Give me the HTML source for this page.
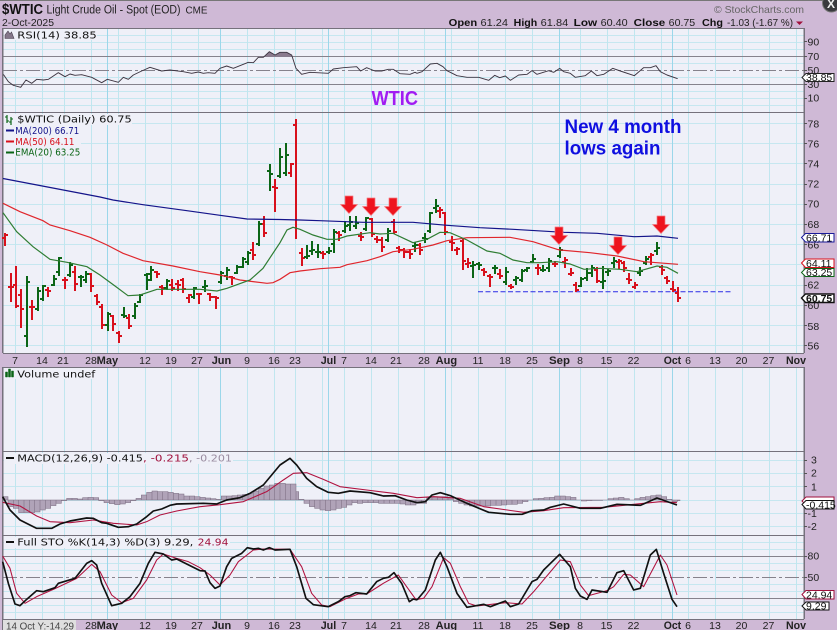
<!DOCTYPE html>
<html><head><meta charset="utf-8"><style>
html,body{margin:0;padding:0;background:#cfb9d6;overflow:hidden}
svg{display:block;font-family:"Liberation Sans",sans-serif}
.d{font-family:"DejaVu Sans",sans-serif;font-size:10px}
.a{font-size:10.5px;fill:#222;text-anchor:middle}
.m{font-size:11px;font-weight:bold;fill:#222}
.y{font-size:10.5px;fill:#222}
.t{font-size:10.5px;fill:#111}
</style></head><body>
<svg width="837" height="630" viewBox="0 0 837 630" xmlns="http://www.w3.org/2000/svg">
<rect width="837" height="630" fill="#cfb9d6"/>
<path d="M0 .5H837" stroke="#777" fill="none"/>
<!-- panels -->
<g fill="#eff0f8">
<rect x="3" y="28" width="801" height="325"/>
<rect x="3" y="367" width="801" height="252"/>
</g>
<!-- horizontal minor grid -->
<path shape-rendering="crispEdges" stroke="#c6e7f0" fill="none" d="M3 35.5H804M3 42.5H804M3 49.5H804M3 63.5H804M3 77.5H804M3 91.5H804M3 98.5H804M3 105.5H804
M3 123.5H804M3 143.5H804M3 163.5H804M3 184.5H804M3 204.5H804M3 224.5H804M3 244.5H804M3 264.5H804M3 285.5H804M3 305.5H804M3 325.5H804M3 345.5H804
M3 460.5H804M3 473.5H804M3 486.5H804M3 500.5H804M3 513.5H804M3 526.5H804
M3 542.5H804M3 549.5H804M3 563.5H804M3 570.5H804M3 584.5H804M3 591.5H804M3 605.5H804M3 612.5H804"/>
<!-- vertical grid -->
<path shape-rendering="crispEdges" stroke="#c0e6ef" fill="none" d="M15.5 28V353M42.5 28V353M64.5 28V353M91.5 28V353M118.5 28V353M145.5 28V353M171.5 28V353M198.5 28V353M247.5 28V353M274.5 28V353M295.5 28V353M322.5 28V353M344.5 28V353M371.5 28V353M398.5 28V353M424.5 28V353M451.5 28V353M478.5 28V353M505.5 28V353M532.5 28V353M580.5 28V353M607.5 28V353M634.5 28V353M661.5 28V353M688.5 28V353M715.5 28V353M742.5 28V353M769.5 28V353M796.5 28V353
M15.5 367V619M42.5 367V619M64.5 367V619M91.5 367V619M118.5 367V619M145.5 367V619M171.5 367V619M198.5 367V619M247.5 367V619M274.5 367V619M295.5 367V619M322.5 367V619M344.5 367V619M371.5 367V619M398.5 367V619M424.5 367V619M451.5 367V619M478.5 367V619M505.5 367V619M532.5 367V619M580.5 367V619M607.5 367V619M634.5 367V619M661.5 367V619M688.5 367V619M715.5 367V619M742.5 367V619M769.5 367V619M796.5 367V619"/>
<path shape-rendering="crispEdges" stroke="#9bd7ea" fill="none" d="M107.5 28V353M220.5 28V353M328.5 28V353M445.5 28V353M559.5 28V353M672.5 28V353M107.5 367V619M220.5 367V619M328.5 367V619M445.5 367V619M559.5 367V619M672.5 367V619"/>
<!-- RSI major lines -->
<path shape-rendering="crispEdges" stroke="#85828c" fill="none" d="M3 56.5H804M3 84.5H804"/>
<path shape-rendering="crispEdges" stroke="#85828c" fill="none" stroke-dasharray="14 3 3 3" d="M3 70.5H804"/>
<!-- STO major lines -->
<path shape-rendering="crispEdges" stroke="#85828c" fill="none" d="M3 556.5H804M3 598.5H804"/>
<path shape-rendering="crispEdges" stroke="#85828c" fill="none" stroke-dasharray="14 3 3 3" d="M3 577.5H804"/>
<!-- RSI line -->
<g transform="scale(.33333)" fill="none" stroke="#3c3440" stroke-width="2.8" stroke-linejoin="round">
<path fill="#8a7a8e" stroke="none" d="M775 170L775 172 790 172 808 155 825 165 840 157 860 157 875 165 877 170Z"/>
<path d="M8 220L25 245 40 256 62 262 78 240 95 250 110 238 130 240 145 238 175 218 195 230 210 222 225 226 245 224 275 232 305 248 322 238 355 247 370 232 385 238 400 225 425 213 450 202 485 213 510 210 550 215 575 220 595 216 610 220 625 218 645 220 660 205 680 198 700 205 745 187 760 188 775 172 790 172 808 155 825 165 840 157 860 157 875 165 888 205 905 223 930 217 985 220 1000 207 1030 203 1070 200 1082 213 1100 203 1125 213 1145 213 1165 208 1180 208 1200 221 1230 223 1245 217 1251 220"/>
</g>
<g transform="translate(417,0) scale(.33333)" fill="none" stroke="#3c3440" stroke-width="2.8" stroke-linejoin="round">
<path d="M0 220L15 215 40 192 60 190 78 200 90 212 120 227 150 232 185 232 215 241 233 226 248 233 265 228 280 241 305 225 330 223 345 212 360 223 395 212 410 217 428 205 440 215 460 220 475 232 505 227 523 213 540 227 560 223 587 205 610 213 652 227 680 203 700 203 717 197 730 215 750 225 782 236"/>
</g>
<!-- panel borders -->
<path shape-rendering="crispEdges" stroke="#75717c" fill="none" d="M3 28.5H804M3 112.5H804M3 353.5H804M3 367.5H804M3 451.5H804M3 535.5H804M3 619.5H804"/>
<path shape-rendering="crispEdges" stroke="#75717c" fill="none" stroke-width="1.5" d="M2.5 28V353M2.5 367V630M804 28V353M804 367V619"/>
<!-- dashed support line -->
<path fill="none" stroke="#2a2ae6" stroke-width="1" stroke-dasharray="5 2.5" d="M478 291.7H732"/>
<!-- bars -->
<path shape-rendering="crispEdges" fill="none" stroke="#d8101c" stroke-width="2" d="M5 233V246M2 238h3m0-3h3M11 273V302M8 287h3m0 0h3M16 266V308M13 285h3m0 21h3M21 289V328M18 295h3m0 14h3M32 300V320M29 307h3m0 0h3M48 287V297M45 290h3m0 1h3M65 277V289M62 280h3m0 0h3M75 266V291M72 272h3m0 12h3M91 273V292M88 274h3m0 12h3M97 294V305M94 296h3m0 6h3M102 304V329M99 307h3m0 18h3M113 315V331M110 316h3m0 8h3M119 331V343M116 333h3m0 3h3M129 314V329M126 318h3m0 8h3M157 271V278M154 272h3m0 2h3M162 285V295M159 287h3m0 1h3M172 279V291M169 285h3m0 3h3M178 280V291M175 284h3m0 1h3M183 278V293M180 280h3m0 9h3M189 294V303M186 298h3m0-3h3M199 293V304M196 294h3m0 0h3M210 293V301M207 294h3m0 3h3M216 296V309M213 297h3m0 1h3M232 276V285M229 277h3m0 1h3M253 242V260M250 250h3m0 5h3M264 216V237M261 224h3m0 9h3M275 179V212M272 187h3m0 1h3M291 163V177M288 173h3m0-9h3M296 119V239M293 125h3m0 0h0M302 248V266M299 253h3m0 5h3M323 251V259M320 253h3m0 1h3M339 231V241M336 233h3m0 2h3M361 232V241M358 236h3m0 1h3M372 218V237M369 219h3m0 15h3M377 236V243M374 239h3m0 1h3M382 237V252M379 240h3m0 7h3M394 219V234M391 222h3m0 10h3M399 246V253M396 248h3m0 2h3M404 248V258M401 250h3m0 2h3M410 249V259M407 252h3m0 2h3M420 243V255M417 245h3m0 5h3M440 207V218M437 211h3m0-1h3M445 212V235M442 213h3m0 19h3M452 236V251M449 242h3m0 1h3M457 247V255M454 250h3m0-1h3M463 238V270M460 241h3m0 20h3M468 258V268M465 264h3m0-1h3M484 268V276M481 270h3m0 2h3M490 274V287M487 276h3m0 1h3M500 269V279M497 274h3m0 2h3M511 284V289M508 286h3m0 1h3M538 264V275M535 268h3m0 0h3M555 261V267M552 264h3m0 0h3M565 257V268M562 262h3m0-2h3M571 268V276M568 274h3m0-1h3M576 282V292M573 285h3m0 5h3M597 267V283M594 270h3m0 11h3M619 259V269M616 262h3m0-1h3M624 261V272M621 263h3m0 5h3M629 273V284M626 279h3m0 1h3M635 282V289M632 287h3m0-2h3M651 253V265M648 257h3m0-2h3M662 265V275M659 267h3m0 3h3M667 276V284M664 278h3m0 3h3M673 281V292M670 289h3m0 1h3M678 287V302M675 293h3m0 5h3"/>
<path shape-rendering="crispEdges" fill="none" stroke="#0b6516" stroke-width="2" d="M27 276V347M24 336h3m0-54h3M38 287V311M35 309h3m0-18h3M43 285V301M40 299h3m0-13h3M54 275V286M51 285h3m0-6h3M59 257V276M56 272h3m0-14h3M70 262V277M67 275h3m0-10h3M81 275V287M78 277h3m0 0h3M86 271V283M83 280h3m0-6h3M108 312V331M105 325h3m0-11h3M124 307V318M121 315h3m0 1h3M135 303V319M132 316h3m0-10h3M140 294V303M137 302h3m0-7h3M147 273V290M144 275h3m0-1h3M151 266V281M148 280h3m0-10h3M167 279V290M164 288h3m0-7h3M194 287V299M191 297h3m0-9h3M205 280V292M202 287h3m0-1h3M221 271V284M218 282h3m0-9h3M227 267V280M224 276h3m0-6h3M237 265V274M234 273h3m0-6h3M243 257V268M240 267h3m0-8h3M248 251V265M245 262h3m0-9h3M259 221V246M256 244h3m0-20h3M270 164V191M267 171h3m0 3h3M280 148V178M277 176h3m0-19h3M286 143V176M283 173h3m0-18h3M307 245V259M304 257h3m0-1h3M312 241V255M309 251h3m0-1h3M318 244V258M315 252h3m0 0h3M329 247V254M326 252h3m0-1h3M334 229V253M331 244h3m0-12h3M345 221V233M342 231h3m0-5h3M350 216V231M347 225h3m0-3h3M356 216V229M353 226h3m0-3h3M366 217V231M363 229h3m0-11h3M388 228V242M385 240h3m0-9h3M415 242V252M412 246h3m0-1h3M425 233V243M422 238h3m0 1h3M430 212V233M427 231h3m0-18h3M436 199V213M433 208h3m0-2h3M473 261V278M470 266h3m0-1h3M479 262V270M476 264h3m0 1h3M495 265V274M492 268h3m0 0h3M506 267V285M503 282h3m0-10h3M516 276V285M513 280h3m0-2h3M522 269V282M519 280h3m0-9h3M527 267V272M524 270h3m0-2h3M533 254V263M530 262h3m0-3h3M543 265V272M540 270h3m0 0h3M549 258V272M546 268h3m0-7h3M560 247V258M557 256h3m0-6h3M581 277V287M578 286h3m0-7h3M587 268V281M584 278h3m0-5h3M592 265V277M589 273h3m0-5h3M603 266V289M600 282h3m0-1h3M608 269V276M605 272h3m0-1h3M614 257V268M611 263h3m0-2h3M640 267V276M637 273h3m0-2h3M646 256V265M643 263h3m0-4h3M657 242V255M654 251h3m0-3h3"/>
<!-- MAs -->
<path fill="none" stroke="#14148a" stroke-width="1.2" d="M3 178.5L100 197 113 200 143 204.7 187 210.7 220 215.3 247 219 280 219.5 300 220 320 220.7 363 222.3 413 222.3 447 225.3 480 227.7 513 229.3 553 231.7 564 232.3 597 233.3 634 236.7 657 236 678 238.3"/>
<path fill="none" stroke="#e0262c" stroke-width="1.2" d="M3 203.3L20 211.7 43 220.7 50 225 70 230.7 90 237.3 107 245 123 253.3 143 260.7 173 266 200 271.7 220 275 240 280 267 283.3 273 282.7 280 279.3 290 272.7 300 271 320 268.7 340 267.3 347 264.7 367 260.7 380 256.7 393 251.7 413 249.3 433 245 447 240.7 467 237.7 510 237.3 533 241.7 557 249.3 560 250 590 252.7 617 256 644 261.7 678 264.3"/>
<path fill="none" stroke="#2f7d33" stroke-width="1.2" d="M3 212.7L16.7 231.7 33 246.7 50 259.3 67 262.3 87 266.7 100 275 115 286 128 295.7 140 295 157 289.3 200 289.3 217 291 227 288.3 250 280 263 268.3 280 242.7 287 230 293 227.3 300 229.3 313 235 327 239.3 337 239.3 347 236 370 232.7 380 234 393 233.3 413 242.7 427 239.3 440 232.3 450 232.7 467 240 487 251 500 253.3 513 260 527 262.7 540 262.7 557 261.7 570 264 584 269.3 600 268.3 620 269.3 637 271.7 657 266 667 267.3 678 273.3"/>
<!-- arrows -->
<g fill="#ee141e" stroke="#f47a80" stroke-width=".7" stroke-linejoin="round">
<path d="M345 196H353V204.5H357.5L349 213.5 340.5 204.5H345Z"/>
<path d="M367 198H375V206.5H379.5L371 215.5 362.5 206.5H367Z"/>
<path d="M389 198H397V206.5H401.5L393 215.5 384.5 206.5H389Z"/>
<path d="M555 227H563V235.5H567.5L559 244.5 550.5 235.5H555Z"/>
<path d="M614 237H622V245.5H626.5L618 254.5 609.5 245.5H614Z"/>
<path d="M657 216H665V224.5H669.5L661 233.5 652.5 224.5H657Z"/>
</g>
<!-- MACD histogram -->
<g transform="translate(0,360) scale(.33333)" fill="#b0a3b8" stroke="#7a6c80" stroke-width="1.6">
<path d="M8 420V410h16V420zM24 420V440h16V420zM40 420V445h16V420zM56 420V458h16V420zM72 420V458h16V420zM88 420V458h16V420zM104 420V456h16V420zM120 420V450h16V420zM136 420V445h16V420zM152 420V437h16V420zM168 420V430h16V420zM184 420V422h16V420zM200 420V415h16V420zM216 420V415h16V420zM232 420V417h16V420zM248 420V413h16V420zM264 420V412h16V420zM280 420V413h16V420zM296 420V422h16V420zM312 420V428h16V420zM328 420V431h16V420zM344 420V434h16V420zM360 420V432h16V420zM376 420V428h16V420zM392 420V422h16V420zM408 420V415h16V420zM424 420V405h16V420zM440 420V397h16V420zM456 420V393h16V420zM472 420V395h16V420zM488 420V395h16V420zM504 420V397h16V420zM520 420V400h16V420zM536 420V402h16V420zM552 420V408h16V420zM568 420V408h16V420zM584 420V410h16V420zM600 420V412h16V420zM616 420V414h16V420zM632 420V416h16V420zM648 420V418h16V420zM664 420V408h16V420zM680 420V408h16V420zM696 420V407h16V420zM712 420V405h16V420zM728 420V403h16V420zM744 420V400h16V420zM760 420V393h16V420zM776 420V385h16V420zM792 420V378h16V420zM808 420V375h16V420zM824 420V370h16V420zM840 420V370h16V420zM856 420V372h16V420zM872 420V372h16V420zM888 420V395h8V420zM896 420V418h16V420zM912 420V430h16V420zM928 420V440h16V420zM944 420V445h16V420zM960 420V450h16V420zM976 420V452h16V420zM992 420V450h16V420zM1008 420V445h16V420zM1024 420V442h16V420zM1040 420V435h16V420zM1056 420V428h16V420zM1072 420V430h16V420zM1088 420V428h16V420zM1104 420V428h16V420zM1120 420V428h16V420zM1136 420V430h16V420zM1152 420V430h16V420zM1168 420V430h16V420zM1184 420V430h16V420zM1200 420V432h16V420zM1216 420V435h16V420zM1232 420V435h16V420z"/>
</g>
<g transform="translate(417,360) scale(.33333)" fill="#b0a3b8" stroke="#7a6c80" stroke-width="1.6">
<path d="M-3 420V430h16V420zM13 420V430h16V420zM29 420V412h16V420zM45 420V410h16V420zM61 420V410h16V420zM77 420V410h16V420zM93 420V412h16V420zM109 420V425h16V420zM125 420V430h16V420zM141 420V435h16V420zM157 420V438h16V420zM173 420V438h16V420zM189 420V438h16V420zM205 420V438h16V420zM221 420V436h16V420zM237 420V436h16V420zM253 420V435h16V420zM269 420V433h16V420zM285 420V433h16V420zM301 420V430h16V420zM317 420V425h16V420zM333 420V420h16V420zM349 420V416h16V420zM365 420V415h16V420zM381 420V413h16V420zM397 420V412h16V420zM413 420V408h16V420zM429 420V408h16V420zM445 420V410h16V420zM461 420V412h16V420zM477 420V420h16V420zM493 420V423h16V420zM509 420V422h16V420zM525 420V421h16V420zM541 420V421h16V420zM557 420V420h16V420zM573 420V416h16V420zM589 420V414h16V420zM605 420V412h16V420zM621 420V416h16V420zM637 420V420h16V420zM653 420V416h16V420zM669 420V412h16V420zM685 420V410h16V420zM701 420V407h16V420zM717 420V405h16V420zM733 420V410h16V420zM749 420V418h16V420zM765 420V425h16V420zM781 420V422h8V420z"/>
</g>
<!-- MACD lines -->
<g transform="translate(0,360) scale(.33333)" fill="none" stroke-linejoin="round">
<path stroke="#b0123f" stroke-width="3.2" d="M8 427L60 438 110 468 150 485 210 488 280 480 340 490 410 495 440 485 480 465 530 453 600 440 660 434 730 425 800 395 850 360 880 340 920 338 970 358 1020 380 1100 390 1180 400 1251 413"/>
<path stroke="#111" stroke-width="5" d="M8 410L30 450 60 480 80 490 110 505 155 505 180 492 210 483 260 474 280 475 305 488 320 490 355 502 385 500 410 492 440 470 460 453 485 447 510 436 530 432 610 430 650 432 680 420 720 413 750 400 790 375 815 345 840 315 870 295 890 315 920 355 950 380 985 397 1015 400 1050 393 1110 398 1150 408 1185 407 1220 420 1251 428"/>
</g>
<g transform="translate(417,360) scale(.33333)" fill="none" stroke-linejoin="round">
<path stroke="#b0123f" stroke-width="3.2" d="M0 413L50 410 130 415 200 440 320 457 380 452 440 443 560 442 640 434 730 425 780 428"/>
<path stroke="#111" stroke-width="5" d="M0 428L25 425 45 405 70 398 100 407 150 430 215 457 280 463 315 463 345 452 380 450 400 442 440 432 490 445 550 445 600 433 670 436 720 414 780 435"/>
</g>
<!-- STO lines -->
<g transform="translate(0,530) scale(.33333)" fill="none" stroke-linejoin="round">
<path stroke="#b0123f" stroke-width="3.2" d="M8 78L30 115 50 190 75 220 110 200 160 178 230 145 275 103 300 125 335 195 365 218 400 205 440 150 470 90 490 72 530 85 565 95 600 113 630 135 660 165 690 135 715 95 760 60 790 57 870 58 905 110 935 190 965 225 990 230 1040 205 1075 192 1100 192 1150 160 1195 135 1220 170 1245 205 1251 208"/>
<path stroke="#111" stroke-width="5" d="M8 95L25 160 45 222 60 227 80 208 110 182 130 185 165 173 175 160 225 145 260 100 275 92 290 105 305 160 335 227 365 220 390 200 420 160 445 100 465 67 490 72 515 90 530 87 600 122 615 123 630 158 645 175 660 168 680 110 695 85 725 70 742 53 760 57 775 55 790 60 808 53 825 60 870 58 890 110 918 205 940 224 985 230 1015 215 1035 200 1050 197 1068 188 1100 192 1130 155 1150 145 1165 142 1182 128 1205 160 1228 215 1240 207 1251 210"/>
</g>
<g transform="translate(417,530) scale(.33333)" fill="none" stroke-linejoin="round">
<path stroke="#b0123f" stroke-width="3.2" d="M0 208L20 205 45 170 80 83 100 100 130 170 155 220 180 228 265 218 315 222 350 185 430 90 460 95 490 165 515 197 570 182 590 170 620 133 640 135 680 170 730 75 750 105 780 195"/>
<path stroke="#111" stroke-width="5" d="M0 210L25 180 55 90 70 67 90 110 120 190 150 232 200 223 220 230 265 213 280 230 305 222 345 155 360 148 380 120 428 73 460 110 475 175 490 198 510 208 525 180 570 187 600 128 620 122 650 180 670 175 700 75 718 58 740 130 765 208 780 230"/>
</g>
<!-- legend backgrounds -->
<g fill="#eff0f8">
<rect x="4" y="29" width="93" height="11"/>
<rect x="4" y="114" width="128" height="11"/>
<rect x="4" y="125" width="77" height="32"/>
<rect x="4" y="368" width="92" height="11"/>
<rect x="4" y="453" width="229" height="11"/>
<rect x="4" y="537" width="226" height="11"/>
</g>
<!-- legend icons -->
<path d="M5 38.5L5 35 8 31 10 34 11.5 32 14 38.5Z" fill="#85778a" stroke="#4a4050" stroke-width=".6"/>
<path d="M7 115V123M11 117V125" stroke="#0b6516" stroke-width="1.2" fill="none"/>
<path d="M5 117h2M7 121h2M9 122h2M11 119h2" stroke="#0b6516" stroke-width="1" fill="none"/>
<path d="M5.5 377V372h2v5zM8.5 377V369h2v8zM11.5 377V371h2v6z" fill="#0b6516" stroke="#0b6516" stroke-width=".5"/>
<g stroke-width="2" fill="none">
<path d="M6 130.5H14" stroke="#14148a"/>
<path d="M6 141.5H14" stroke="#d8101c"/>
<path d="M6 152.5H14" stroke="#0b6516"/>
<path d="M6 458H14" stroke="#111"/>
<path d="M6 542H14" stroke="#111"/>
</g>
<!-- header -->
<text x="2" y="14" font-size="14.5" font-weight="bold" fill="#111" textLength="41" lengthAdjust="spacingAndGlyphs">$WTIC</text>
<text x="46.5" y="13.5" font-size="11.5" fill="#222" textLength="134" lengthAdjust="spacingAndGlyphs">Light Crude Oil - Spot (EOD)</text>
<text x="185.5" y="13.5" font-size="10" fill="#222" textLength="22" lengthAdjust="spacingAndGlyphs">CME</text>
<text x="2" y="26" font-size="10" fill="#222" textLength="52" lengthAdjust="spacingAndGlyphs">2-Oct-2025</text>
<text x="714" y="13" font-size="10.5" fill="#666" textLength="90" lengthAdjust="spacing">© StockCharts.com</text>
<g font-size="10.5" fill="#222">
<text x="448.7" y="26" font-weight="bold" fill="#111" textLength="28.5" lengthAdjust="spacingAndGlyphs">Open</text>
<text x="480.5" y="26" textLength="27.5" lengthAdjust="spacingAndGlyphs">61.24</text>
<text x="513.7" y="26" font-weight="bold" fill="#111" textLength="23.5" lengthAdjust="spacingAndGlyphs">High</text>
<text x="540.7" y="26" textLength="27.5" lengthAdjust="spacingAndGlyphs">61.84</text>
<text x="573.7" y="26" font-weight="bold" fill="#111" textLength="23.5" lengthAdjust="spacingAndGlyphs">Low</text>
<text x="600.7" y="26" textLength="27" lengthAdjust="spacingAndGlyphs">60.40</text>
<text x="633.7" y="26" font-weight="bold" fill="#111" textLength="31.5" lengthAdjust="spacingAndGlyphs">Close</text>
<text x="668.7" y="26" textLength="26.5" lengthAdjust="spacingAndGlyphs">60.75</text>
<text x="702" y="26" font-weight="bold" fill="#111" textLength="21" lengthAdjust="spacingAndGlyphs">Chg</text>
<text x="727" y="26" textLength="66" lengthAdjust="spacingAndGlyphs">-1.03 (-1.67 %)</text>
</g>
<path d="M796 21.5H803L799.5 25Z" fill="#a0103c"/>
<!-- close button -->
<circle cx="831.5" cy="3" r="9" fill="#3a3a3e" stroke="#777" stroke-width="1"/>
<text x="831" y="8" font-size="12" font-weight="bold" fill="#f2f2f2" text-anchor="middle">X</text>
<!-- annotations -->
<text x="371.5" y="105" font-size="20" font-weight="bold" fill="#a11cf2" textLength="46.5" lengthAdjust="spacingAndGlyphs">WTIC</text>
<text x="564.5" y="133" font-size="19" font-weight="bold" fill="#0f0fe0" textLength="117" lengthAdjust="spacingAndGlyphs">New 4 month</text>
<text x="564.5" y="154.5" font-size="19" font-weight="bold" fill="#0f0fe0" textLength="96" lengthAdjust="spacingAndGlyphs">lows again</text>
<!-- legends -->
<text class="d" x="17.3" y="38.7" fill="#111" textLength="79.5" lengthAdjust="spacingAndGlyphs">RSI(14) 38.85</text>
<text class="d" x="17.3" y="122.7" fill="#111" textLength="114.5" lengthAdjust="spacingAndGlyphs">$WTIC (Daily) 60.75</text>
<text class="d" x="15.3" y="134" fill="#14148a" textLength="64" lengthAdjust="spacingAndGlyphs">MA(200) 66.71</text>
<text class="d" x="15.3" y="145" fill="#d8101c" textLength="59.2" lengthAdjust="spacingAndGlyphs">MA(50) 64.11</text>
<text class="d" x="15.3" y="155.7" fill="#0b6516" textLength="65" lengthAdjust="spacingAndGlyphs">EMA(20) 63.25</text>
<text class="d" x="17.3" y="377.7" fill="#111" textLength="78" lengthAdjust="spacingAndGlyphs">Volume undef</text>
<text class="d" x="17.3" y="461.7" fill="#111" textLength="125.7" lengthAdjust="spacingAndGlyphs">MACD(12,26,9) -0.415</text>
<text class="d" x="143" y="461.7" fill="#a0103c" textLength="46" lengthAdjust="spacingAndGlyphs">, -0.215</text>
<text class="d" x="189" y="461.7" fill="#9a8ca0" textLength="43" lengthAdjust="spacingAndGlyphs">, -0.201</text>
<text class="d" x="17.3" y="545.7" fill="#111" textLength="176" lengthAdjust="spacingAndGlyphs">Full STO %K(14,3) %D(3) 9.29,</text>
<text class="d" x="197.7" y="545.7" fill="#a0103c" textLength="30.8" lengthAdjust="spacingAndGlyphs">24.94</text>
<!-- right axis ticks -->
<path shape-rendering="crispEdges" stroke="#555" fill="none" d="M804 41.5h3M804 56.5h3M804 70.5h3M804 84.5h3M804 98.5h3M804 123.5h3M804 143.5h3M804 163.5h3M804 184.5h3M804 204.5h3M804 224.5h3M804 244.5h3M804 264.5h3M804 285.5h3M804 305.5h3M804 325.5h3M804 345.5h3M804 460.5h3M804 473.5h3M804 486.5h3M804 513.5h3M804 526.5h3M804 556.5h3M804 577.5h3M804 598.5h3"/>
<g class="y">
<text x="807.5" y="45.5" class="y">90</text><text x="807.5" y="60" class="y">70</text><text x="807.5" y="74" class="y">50</text><text x="807.5" y="88" class="y">30</text><text x="807.5" y="101.5" class="y">10</text>
<text x="807.5" y="127.5" class="y">78</text><text x="807.5" y="147.5" class="y">76</text><text x="807.5" y="167.5" class="y">74</text><text x="807.5" y="187.5" class="y">72</text><text x="807.5" y="207.5" class="y">70</text><text x="807.5" y="228" class="y">68</text><text x="807.5" y="248.5" class="y">66</text><text x="807.5" y="288.5" class="y">62</text><text x="807.5" y="309" class="y">60</text><text x="807.5" y="330" class="y">58</text><text x="807.5" y="349.5" class="y">56</text>
<text x="811" y="463.5" class="y">3</text><text x="811" y="476.5" class="y">2</text><text x="811" y="490.5" class="y">1</text><text x="807.5" y="517" class="y">-1</text><text x="807.5" y="530" class="y">-2</text>
<text x="807.5" y="559.5" class="y">80</text><text x="807.5" y="581" class="y">50</text>
</g>
<!-- tags -->
<g stroke-width="1" fill="#fff">
<path d="M802 77.5L806 73.5H834V81.5H806Z" stroke="#222"/>
<path d="M801.5 237.5L805.5 233.5H834V242H805.5Z" stroke="#1a1a9a"/>
<path d="M801.5 263L805.5 259H834V267.5H805.5Z" stroke="#d8101c"/>
<path d="M801.5 272.5L805.5 268.5H834V276.5H805.5Z" stroke="#0b6516"/>
<path d="M801.5 298L805.5 294H834V302.5H805.5Z" stroke="#111" stroke-width="1.4"/>
<path d="M802 501L806 497H834V505H806Z" stroke="#a0103c"/>
<path d="M802 504.5L806 500.5H834V509H806Z" stroke="#111"/>
<path d="M802 594.5L806 590.5H834V599H806Z" stroke="#a0103c"/>
<path d="M802 606L806 602H829V610H806Z" stroke="#111"/>
</g>
<g class="t">
<text class="t" x="806" y="81">38.85</text>
<text class="t" x="806" y="241.5">66.71</text>
<text class="t" x="806" y="267">64.11</text>
<text class="t" x="806" y="276">63.25</text>
<text x="806" y="302" font-size="10.5" font-weight="bold" fill="#111">60.75</text>
<text class="t" x="806" y="508.5">-0.415</text>
<text class="t" x="806" y="598.5">24.94</text>
<text class="t" x="806" y="609.5">9.29</text>
</g>
<!-- x axis top -->
<g>
<text class="a" x="15" y="364">7</text><text class="a" x="42" y="364">14</text><text class="a" x="63" y="364">21</text><text class="a" x="91" y="364">28</text><text class="m" x="96.7" y="364" textLength="21.5" lengthAdjust="spacingAndGlyphs">May</text><text class="a" x="145" y="364">12</text><text class="a" x="171" y="364">19</text><text class="a" x="197" y="364">27</text><text class="m" x="211.7" y="364" textLength="19.5" lengthAdjust="spacingAndGlyphs">Jun</text><text class="a" x="247" y="364">9</text><text class="a" x="274" y="364">16</text><text class="a" x="295" y="364">23</text><text class="m" x="320.7" y="364" textLength="15.5" lengthAdjust="spacingAndGlyphs">Jul</text><text class="a" x="344" y="364">7</text><text class="a" x="371" y="364">14</text><text class="a" x="396" y="364">21</text><text class="a" x="424" y="364">28</text><text class="m" x="435.7" y="364" textLength="21.5" lengthAdjust="spacingAndGlyphs">Aug</text><text class="a" x="478" y="364">11</text><text class="a" x="505" y="364">18</text><text class="a" x="532" y="364">25</text><text class="m" x="549" y="364" textLength="21" lengthAdjust="spacingAndGlyphs">Sep</text><text class="a" x="580" y="364">8</text><text class="a" x="606.5" y="364">15</text><text class="a" x="633.5" y="364">22</text><text class="m" x="663.7" y="364" textLength="17.5" lengthAdjust="spacingAndGlyphs">Oct</text><text class="a" x="688" y="364">6</text><text class="a" x="715" y="364">13</text><text class="a" x="741.5" y="364">20</text><text class="a" x="768.5" y="364">27</text><text class="m" x="786" y="364" textLength="20" lengthAdjust="spacingAndGlyphs">Nov</text>
</g>
<!-- x axis bottom -->
<g>
<text class="a" x="91" y="629">28</text><text class="m" x="96.7" y="629" textLength="21.5" lengthAdjust="spacingAndGlyphs">May</text><text class="a" x="145" y="629">12</text><text class="a" x="171" y="629">19</text><text class="a" x="197" y="629">27</text><text class="m" x="211.7" y="629" textLength="19.5" lengthAdjust="spacingAndGlyphs">Jun</text><text class="a" x="247" y="629">9</text><text class="a" x="274" y="629">16</text><text class="a" x="295" y="629">23</text><text class="m" x="320.7" y="629" textLength="15.5" lengthAdjust="spacingAndGlyphs">Jul</text><text class="a" x="344" y="629">7</text><text class="a" x="371" y="629">14</text><text class="a" x="396" y="629">21</text><text class="a" x="424" y="629">28</text><text class="m" x="435.7" y="629" textLength="21.5" lengthAdjust="spacingAndGlyphs">Aug</text><text class="a" x="478" y="629">11</text><text class="a" x="505" y="629">18</text><text class="a" x="532" y="629">25</text><text class="m" x="549" y="629" textLength="21" lengthAdjust="spacingAndGlyphs">Sep</text><text class="a" x="580" y="629">8</text><text class="a" x="606.5" y="629">15</text><text class="a" x="633.5" y="629">22</text><text class="m" x="663.7" y="629" textLength="17.5" lengthAdjust="spacingAndGlyphs">Oct</text><text class="a" x="688" y="629">6</text><text class="a" x="715" y="629">13</text><text class="a" x="741.5" y="629">20</text><text class="a" x="768.5" y="629">27</text><text class="m" x="786" y="629" textLength="20" lengthAdjust="spacingAndGlyphs">Nov</text>
</g>
<!-- bottom-left tooltip -->
<rect x="3" y="620" width="73" height="10" fill="#dfdfdf"/>
<text x="6" y="629.5" font-size="10" fill="#444" textLength="68" lengthAdjust="spacingAndGlyphs">14 Oct Y:-14.29</text>
</svg>
</body></html>
